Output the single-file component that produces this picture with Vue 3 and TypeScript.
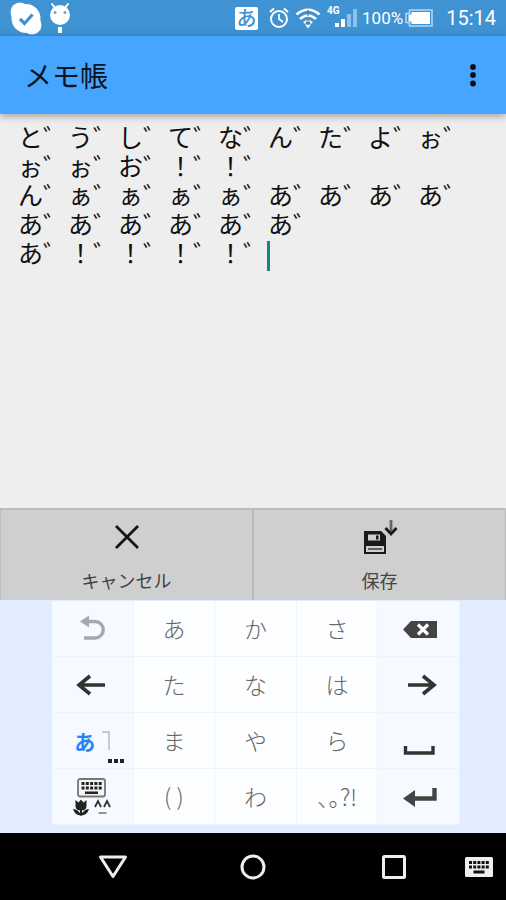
<script setup lang="ts">
import { ref } from 'vue'

interface Key {
  id: string
  label: string
  icon?: string
  side?: boolean
}

const withMarks = (line: string): string => [...line].map((c) => c + '゛').join('')

const memo = ref<string>(
  ['とうしてなんたよぉ', 'ぉぉお\uFF01\uFF01', 'んぁぁぁぁああああ', 'ああああああ', 'あ\uFF01\uFF01\uFF01\uFF01']
    .map(withMarks)
    .join('\n'),
)

const keys: Key[] = [
  { id: 'undo', label: '元に戻す', icon: 'undo', side: true },
  { id: 'a', label: 'あ' },
  { id: 'ka', label: 'か' },
  { id: 'sa', label: 'さ' },
  { id: 'del', label: '削除', icon: 'del', side: true },
  { id: 'left', label: '左', icon: 'left', side: true },
  { id: 'ta', label: 'た' },
  { id: 'na', label: 'な' },
  { id: 'ha', label: 'は' },
  { id: 'right', label: '右', icon: 'right', side: true },
  { id: 'mode', label: '文字切替', icon: 'mode', side: true },
  { id: 'ma', label: 'ま' },
  { id: 'ya', label: 'や' },
  { id: 'ra', label: 'ら' },
  { id: 'space', label: '空白', icon: 'space', side: true },
  { id: 'symbols', label: '記号', icon: 'symbols', side: true },
  { id: 'paren', label: '( )' },
  { id: 'wa', label: 'わ' },
  { id: 'punct', label: '、。?!' },
  { id: 'enter', label: '改行', icon: 'enter', side: true },
]

const dots = [0, 1, 2, 3, 4]
</script>

<template>
  <div class="screen">
    <header class="status">
      <svg class="skype" viewBox="0 0 32 34" aria-hidden="true">
        <circle cx="10" cy="11" r="9.500" fill="#fff" />
        <circle cx="22" cy="24" r="9.500" fill="#fff" />
        <circle cx="16" cy="17.500" r="14.500" fill="#fff" />
        <path d="M10 18l4.500 4.500 8-9" fill="none" stroke="#3f93d3" stroke-width="3.200" />
      </svg>
      <svg class="droid" viewBox="0 0 22 32" aria-hidden="true">
        <path d="M3 2l3 4M19 2l-3 4" stroke="#fff" stroke-width="2" stroke-linecap="round" />
        <circle cx="11" cy="13" r="10" fill="#fff" />
        <circle cx="6" cy="10.500" r="1.500" fill="#6fa9d4" />
        <circle cx="16" cy="10.500" r="1.500" fill="#6fa9d4" />
        <path d="M11 25v6" stroke="#fff" stroke-width="4" />
      </svg>
      <span class="ime">あ</span>
      <svg class="alarm" viewBox="0 0 20 22" aria-hidden="true" fill="none" stroke="#fff">
        <circle cx="10" cy="12" r="8" stroke-width="2" />
        <path d="M10 7v5l4 3" stroke-width="1.800" />
        <path d="M1 5l4-3.500M19 5l-4-3.500" stroke-width="2.200" />
      </svg>
      <svg class="wifi" viewBox="0 0 26 22" aria-hidden="true" fill="none" stroke="#fff">
        <path d="M1.500 7.500Q13-2 24.500 7.500M5 12Q13 5 21 12M9 16Q13 12.500 17 16" stroke-width="2.600" />
        <path d="M10 17.500h6L13 21.500z" fill="#fff" stroke="none" />
        <path d="M13 4v5M11 6.500l2-3 2 3M13 12v5M11 14.500l2 3 2-3" stroke="#5b7890" stroke-width="1.200" />
      </svg>
      <span class="signal">
        <span class="net">4G</span>
        <svg viewBox="0 0 22 18" aria-hidden="true">
          <path d="M0 14h4v4H0zM6 10h4v8H6z" fill="#fff" />
          <path d="M12 5h4v13h-4zM18 0h4v18h-4z" fill="#8fc0e8" />
        </svg>
      </span>
      <span class="percent">100%</span>
      <svg class="battery" viewBox="0 0 28 18" aria-hidden="true">
        <path d="M4.500 1h22.500v16H4.500v-3.500H1v-9h3.500z" fill="none" stroke="#b5d9f5" stroke-width="1.500" />
        <path d="M6.500 3h18.500v12H6.500V12.500H3.500v-7h3z" fill="#fff" />
      </svg>
      <time class="clock">15:14</time>
    </header>

    <div class="appbar">
      <h1>メモ帳</h1>
      <button class="more" type="button" aria-label="メニュー">
        <svg viewBox="0 0 6 24" aria-hidden="true">
          <circle cx="3" cy="4" r="2.900" /><circle cx="3" cy="12" r="2.900" /><circle cx="3" cy="20.500" r="2.900" />
        </svg>
      </button>
    </div>

    <main class="editor">
      <textarea v-model="memo" aria-label="メモ" spellcheck="false"></textarea>
      <span class="caret"></span>
    </main>

    <div class="actions">
      <button type="button">
        <svg viewBox="0 0 36 36" aria-hidden="true">
          <path d="M7 6l22 22M29 6L7 28" stroke="#151515" stroke-width="2.800" />
        </svg>
        <span>キャンセル</span>
      </button>
      <button type="button">
        <svg viewBox="0 0 36 36" aria-hidden="true">
          <path d="M2 11h17l5 5v18H2z" fill="#1a1a1a" />
          <path d="M6 14.500h12v6H6z" fill="#cfcfcf" />
          <path d="M14 15.500h2.500v4H14z" fill="#1a1a1a" />
          <path d="M4 26h18v6H4z" fill="#cfcfcf" />
          <path d="M6 29h14" stroke="#444" stroke-width="1.600" />
          <path d="M29 0v13" stroke="#666" stroke-width="2.800" />
          <path d="M23.500 8l5.500 6 5.500-6" fill="none" stroke="#1a1a1a" stroke-width="2.800" />
        </svg>
        <span>保存</span>
      </button>
    </div>

    <div class="keyboard">
      <button
        v-for="key in keys"
        :key="key.id"
        type="button"
        class="key"
        :class="{ side: key.side }"
        :aria-label="key.label"
      >
        <svg v-if="key.icon === 'undo'" viewBox="0 0 40 40" aria-hidden="true">
          <path d="M15 12.500h8a8 8 0 0 1 0 16.500H12" fill="none" stroke="#a6a8ab" stroke-width="3.400" />
          <path d="M8 12.500l9-6v12z" fill="#a6a8ab" />
        </svg>
        <svg v-else-if="key.icon === 'del'" viewBox="0 0 40 40" aria-hidden="true">
          <path d="M4 20.500l8-8.500h26v17H12z" fill="#444" />
          <path d="M19 15.500l10 10M29 15.500l-10 10" stroke="#fff" stroke-width="3.200" />
        </svg>
        <svg v-else-if="key.icon === 'left'" viewBox="0 0 40 40" aria-hidden="true" fill="none" stroke="#333" stroke-width="3.600">
          <path d="M33 20H7M18 11L7 20 18 29" />
        </svg>
        <svg v-else-if="key.icon === 'right'" viewBox="0 0 40 40" aria-hidden="true" fill="none" stroke="#333" stroke-width="3.600">
          <path d="M9 20h26M24 11l11 9-11 9" />
        </svg>
        <svg v-else-if="key.icon === 'space'" class="low" viewBox="0 0 40 40" aria-hidden="true" fill="none" stroke="#333" stroke-width="3.400">
          <path d="M6.500 17v7h27.500V17" />
        </svg>
        <svg v-else-if="key.icon === 'enter'" viewBox="0 0 40 40" aria-hidden="true">
          <path d="M35.500 11v10.500H13" fill="none" stroke="#444" stroke-width="4.400" />
          <path d="M4 21.500L16 13v17z" fill="#444" />
        </svg>
        <span v-else-if="key.icon === 'mode'" class="mode">
          <b>あ</b>
          <svg viewBox="0 0 8 20" aria-hidden="true"><path d="M0 1h7v18" fill="none" stroke="#b4b8bd" stroke-width="1.400" /></svg>
          <svg class="ellipsis" viewBox="0 0 16 4" aria-hidden="true"><path d="M0 0h4v4H0zM6 0h4v4H6zM12 0h4v4h-4z" fill="#222" /></svg>
        </span>
        <svg v-else-if="key.icon === 'symbols'" viewBox="0 0 40 40" aria-hidden="true">
          <rect x="6" y="2" width="27" height="17.500" rx="2" fill="#f4f5f7" stroke="#777" stroke-width="1.800" />
          <g fill="#222">
            <template v-for="d in dots" :key="d">
              <rect :x="9.500 + d * 4.300" y="5" width="3" height="3" />
              <rect :x="9.500 + d * 4.300" y="9.500" width="3" height="3" />
            </template>
            <rect x="13" y="14.500" width="13" height="2.500" />
            <path d="M3.500 23l3 2.500 2.500-3 2.500 3 3-2.500v6q0 4.500-5.500 4.500t-5.500-4.500z" />
            <path d="M1 32q5.500 0 8 6.500-6 0-8-6.500zM17 32q-5.500 0-8 6.500 6 0 8-6.500z" />
            <path d="M8 32h2v6.500H8z" />
          </g>
          <path d="M23 30l3-6 3 6M32 30l3-6 3 6" fill="none" stroke="#333" stroke-width="1.800" />
          <path d="M26.500 36h8" stroke="#888" stroke-width="1.800" />
        </svg>
        <template v-else>{{ key.label }}</template>
      </button>
    </div>

    <nav class="navbar">
      <button type="button" aria-label="戻る">
        <svg viewBox="0 0 30 30" aria-hidden="true"><path d="M2.500 5h25L15 24.500z" /></svg>
      </button>
      <button type="button" aria-label="ホーム">
        <svg viewBox="0 0 30 30" aria-hidden="true"><circle cx="15" cy="15" r="11" /></svg>
      </button>
      <button type="button" aria-label="履歴">
        <svg viewBox="0 0 30 30" aria-hidden="true"><rect x="4.500" y="4.500" width="21" height="21" rx="1" /></svg>
      </button>
      <button class="ime-switch" type="button" aria-label="キーボード切替">
        <svg viewBox="0 0 30 30" aria-hidden="true">
          <rect class="plate" x="1" y="5" width="28" height="20" rx="1.500" />
          <g class="pads">
            <template v-for="d in dots" :key="d">
              <rect :x="5 + d * 4.200" y="9" width="3" height="3" />
              <rect :x="5 + d * 4.200" y="13.500" width="3" height="3" />
            </template>
            <rect x="9.500" y="18.500" width="11" height="3" />
          </g>
        </svg>
      </button>
    </nav>
  </div>
</template>

<style>
body {
  background: #000;
}
</style>

<style scoped>
.screen {
  display: flex;
  flex-direction: column;
  min-height: 100vh;
  font-family: Roboto, 'Noto Sans CJK JP', sans-serif;
  background: #eee;
}

button {
  margin: 0;
  padding: 0;
  border: 0;
  background: none;
  color: inherit;
  font: inherit;
}

svg {
  display: block;
}

.status {
  display: flex;
  align-items: center;
  height: 36px;
  padding: 0 10px;
  background: #3f93d3;
  color: #fff;
}

.skype {
  width: 32px;
  height: 34px;
}

.droid {
  width: 22px;
  height: 32px;
  margin-left: 7px;
}

.ime {
  width: 23px;
  height: 23px;
  margin-left: auto;
  border-radius: 2px;
  background: #fff;
  color: #3f93d3;
  font-family: 'Noto Sans CJK JP', sans-serif;
  font-size: 20px;
  font-weight: 500;
  line-height: 22px;
  text-align: center;
}

.alarm {
  width: 20px;
  height: 22px;
  margin-left: 11px;
}

.wifi {
  width: 26px;
  height: 22px;
  margin-left: 6px;
}

.signal {
  position: relative;
  width: 30px;
  height: 20px;
  margin-left: 6px;
}

.signal svg {
  width: 22px;
  height: 18px;
  margin: 1px 0 0 8px;
}

.net {
  position: absolute;
  top: -2px;
  left: 0;
  font-size: 10px;
  font-weight: 700;
  line-height: 10px;
}

.percent {
  margin-left: 5px;
  font-size: 17px;
}

.battery {
  width: 28px;
  height: 18px;
  margin-left: 2px;
}

.clock {
  margin-left: 13px;
  font-size: 20px;
}

.appbar {
  position: relative;
  display: flex;
  align-items: center;
  justify-content: space-between;
  height: 78px;
  padding: 0 20px 0 24px;
  background: #45a5ff;
  box-shadow: 0 2px 8px rgba(0, 0, 0, 0.35);
  color: #0b1420;
}

h1 {
  margin: 0;
  font-family: 'Noto Sans CJK JP', sans-serif;
  font-size: 28px;
  font-weight: 400;
  line-height: 40px;
}

.more {
  width: 26px;
  height: 40px;
}

.more svg {
  width: 6px;
  height: 24px;
  margin: 0 auto;
  fill: #0b0f14;
}

.editor {
  position: relative;
  display: flex;
  flex: 1;
}

textarea {
  flex: 1;
  min-width: 0;
  padding: 8px 16px 0 18px;
  border: 0;
  outline: 0;
  resize: none;
  overflow: hidden;
  background: transparent;
  color: #111;
  font-family: 'Noto Sans CJK JP', sans-serif;
  font-size: 25px;
  line-height: 29px;
}

.caret {
  position: absolute;
  top: 127px;
  left: 267px;
  width: 3px;
  height: 30px;
  background: #13897b;
}

.actions {
  display: grid;
  grid-template-columns: 1fr 1fr;
  height: 92px;
}

.actions button {
  display: flex;
  flex-direction: column;
  align-items: center;
  gap: 12px;
  padding-top: 10px;
  border: 2px solid #bcbcbc;
  border-width: 2px 1px 0;
  background: #cfcfcf;
  color: #444;
  font-family: 'Noto Sans CJK JP', sans-serif;
  font-size: 18px;
  line-height: 24px;
}

.actions svg {
  width: 36px;
  height: 36px;
}

.keyboard {
  display: grid;
  grid-template-columns: repeat(5, 1fr);
  grid-auto-rows: 56px;
  padding: 1px 46px 8px 52px;
  background: #e1ecfe;
}

.key {
  display: flex;
  align-items: center;
  justify-content: center;
  padding-bottom: 2px;
  border: 1px solid #f0f3fd;
  border-width: 0 1px 1px 0;
  background: #fdfeff;
  color: #666;
  font-family: 'Noto Sans CJK JP', sans-serif;
  font-feature-settings: 'halt';
  font-size: 23px;
  font-weight: 300;
}

.side {
  padding-bottom: 0;
  background: #f6f9ff;
}

.key > svg {
  width: 40px;
  height: 40px;
}

.key > .low {
  margin-top: 16px;
}

.mode {
  position: relative;
  display: flex;
  align-items: center;
  gap: 7px;
}

.mode b {
  color: #2583f5;
  font-size: 21px;
  font-weight: 700;
}

.mode svg {
  width: 8px;
  height: 20px;
}

.mode .ellipsis {
  position: absolute;
  right: -14px;
  bottom: -7px;
  width: 16px;
  height: 4px;
}

.navbar {
  display: grid;
  grid-template-columns: 1fr 1fr 1fr 42px;
  align-items: center;
  height: 67px;
  padding-left: 43px;
  background: #000;
}

.navbar button {
  display: flex;
  justify-content: center;
}

.navbar svg {
  width: 30px;
  height: 30px;
  fill: none;
  stroke: #eee;
  stroke-width: 3;
  stroke-linejoin: round;
}

.navbar .ime-switch {
  justify-content: flex-start;
}

.navbar .plate {
  fill: #eee;
  stroke: none;
}

.navbar .pads {
  fill: #111;
  stroke: none;
}
</style>
